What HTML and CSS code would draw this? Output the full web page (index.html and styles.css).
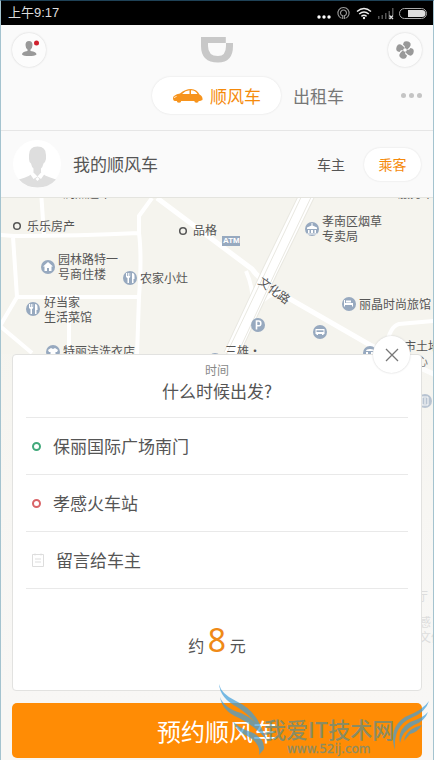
FILE: index.html
```html
<!DOCTYPE html>
<html lang="zh-CN">
<head>
    <meta charset="UTF-8">
    <meta name="viewport" content="width=device-width, initial-scale=1.0">
    <title>我的顺风车</title>
    <link rel="stylesheet" href="styles.css">
</head>
<body>
    <div class="phone">
        <div class="status-bar">
            <span>上午9:17</span>
            <svg class="status-icons" width="112" height="20" viewBox="0 0 112 20">
                <g fill="#fff"><circle cx="3" cy="14" r="1.7"/><circle cx="8" cy="14" r="1.7"/><circle cx="13" cy="14" r="1.7"/></g>
                <g fill="none" stroke="#999" stroke-width="1.1">
                    <path d="M25.5 15.3a5.600 5.600 0 1 1 4 0M26 12.600a3 3 0 1 1 3 0M26.700 12v4M28.400 12v4"/>
                </g>
                <g fill="none" stroke="#eee" stroke-width="1.5">
                    <path d="M41 8.500q7-6 14 0M43.200 11q4.800-4 9.600 0M45.400 13.300q2.600-2 5.200 0"/>
                </g>
                <circle cx="48" cy="15" r="1.200" fill="#eee"/>
                <g fill="#555"><path d="M62 13h1.500v3H62zM65.500 12h1.500v4h-1.500zM69 10h1.500v6H69zM72.500 8H74v8h-1.500zM76 5h1.500v7H76z"/></g>
                <path d="M73.500 12.500l3.500 3.500M77 12.500l-3.500 3.500" stroke="#ddd" stroke-width="1.300"/>
                <rect x="83.500" y="5.500" width="27" height="10" rx="5" fill="none" stroke="#aaa"/>
                <path d="M92 7h14a3.500 3.500 0 0 1 0 7H92z" fill="#ddd"/>
            </svg>
        </div>

        <header class="header">
            <div class="top-row">
                <button class="round-btn" aria-label="个人中心">
                    <svg width="34" height="34" viewBox="0 0 34 34">
                        <path d="M13.500 12q0-4 3.500-4t3.500 4q0 3-2 4.500v1.500q6 .8 6 3.500-2 1.500-7.500 1.500T10 21.500q0-2.700 5.500-3.500v-1.500q-2-1.500-2-4.500z" fill="#999"/>
                        <circle cx="24.500" cy="10" r="2.500" fill="#d0202e"/>
                    </svg>
                </button>
                <svg class="logo" width="32" height="26" viewBox="0 0 32 26">
                    <path d="M0 0H25V6H32V9Q32 25.500 17 25.500Q0 25.500 0 9ZM7 6V9Q7 19 17 19Q25 19 25 9V6Z" fill="#c8c8c8" fill-rule="evenodd"/>
                    <path d="M25.300 0V6" stroke="#fafafa"/>
                </svg>
                <button class="round-btn" aria-label="活动">
                    <svg width="34" height="34" viewBox="0 0 34 34">
                        <g fill="#999" transform="rotate(18 17 17)">
                            <path id="blade" d="M16 17Q17 13 13.500 12.500Q12.500 8 17.500 8Q22 8.500 20.500 13L18.500 17z"/>
                            <use href="#blade" transform="rotate(90 17 17)"/>
                            <use href="#blade" transform="rotate(180 17 17)"/>
                            <use href="#blade" transform="rotate(270 17 17)"/>
                        </g>
                        <circle cx="17" cy="17" r="1.800" fill="#fff"/>
                    </svg>
                </button>
            </div>
            <nav class="tabs">
                <button class="tab active">
                    <svg width="32" height="16" viewBox="0 0 32 16">
                        <path d="M1 10q0-3 7-4.500Q13 1 19 1q6 .2 8.500 5.500Q31 8 30.500 12l-2.500 1H3Q1 13 1 10z" fill="#f7941d"/>
                        <path d="M10 6q3.500-3.500 7.500-3.800V6zM19 2.200q4.500.2 6.500 3.800H19z" fill="#fff"/>
                        <g fill="#f7941d"><circle cx="7" cy="12.500" r="2.300"/><circle cx="24.500" cy="12.500" r="2.300"/></g>
                        <path d="M2 9.500q2-.2 2.500-1.500" fill="none" stroke="#fff" stroke-width=".8"/>
                    </svg>
                    顺风车
                </button>
                <button class="tab">出租车</button>
                <button class="more" aria-label="更多"><i></i><i></i><i></i></button>
            </nav>
        </header>

        <section class="profile">
            <svg width="48" height="48" viewBox="0 0 48 48">
                <circle cx="24" cy="24" r="24" fill="#fff"/>
                <path d="M16 15q0-8.500 8.500-8.500T33 15v4q-.5 3-2.500 4.500-1 4-2.500 5V32q2 3.500 15 7.500-7 8-18.500 8T6 39.500Q18 36 20.500 32v-3.500q-1.800-1.500-2.500-5-2-1.500-2-4.500z" fill="#dedede"/>
                <path d="M20 32l4.500 4.500L28.500 32l3 2-3.500 5-3.500-2.500-4 2.500-3.500-5z" fill="#fff"/>
                <path d="M24.500 37l2 2-2 2-2-2z" fill="#fff"/>
            </svg>
            <h1>我的顺风车</h1>
            <button class="role">车主</button>
            <button class="role active">乘客</button>
        </section>

        <main class="map">
            <svg class="roads" width="432" height="563" viewBox="1 197 432 563">
                <g fill="none" stroke="#fff" stroke-width="4">
                    <path d="M41 190L44 234M0 234L14 235Q80 235 139 232M13 236L17 296L0 325M17 296L139 296M69 296V354M0 325L32 352M152 197L139 215V232Q142 255 139 296L137 354"/>
                    <path d="M157 197L252 268Q258 277 276 290L370 344L440 376" stroke-width="5"/>
                    <path d="M246 270Q254 288 253 310M253 310Q264 296 276 292M386 346Q390 325 399 323L434 320M434 323L441 321"/>
                </g>
                <g fill="none">
                    <path d="M309 190L270 270L231 354" stroke="#e9e8e1" stroke-width="16"/>
                    <path d="M309 190L270 270L231 354" stroke="#fff" stroke-width="14"/>
                    <path d="M304 190L268 266L226 354M314 190L275 272L237 354" stroke="#e9e8e1"/>
                </g>
                <g fill="none" stroke="#555" stroke-width="1.500"><circle cx="17" cy="225" r="3.300"/><circle cx="183" cy="230" r="3.300"/></g>
                <g fill="#97a9bf">
                    <circle cx="48" cy="266" r="7"/><circle cx="130" cy="277" r="7"/><circle cx="33" cy="308" r="7"/>
                    <circle cx="53" cy="351" r="7"/><circle cx="312" cy="228" r="7"/><circle cx="258" cy="324" r="7"/>
                    <circle cx="320" cy="331" r="7"/><circle cx="349" cy="303" r="7"/><circle cx="370" cy="352" r="7"/>
                    <circle cx="425" cy="400" r="7"/><circle cx="215" cy="359" r="7"/><rect x="222" y="235" width="18" height="10"/>
                </g>
                <g fill="#fff">
                    <path d="M48 261l5 4.500h-1.500V270H49v-3h-2v3h-2.500v-4.500H43z"/>
                    <path id="fork" d="M126 272h1v3h.8v-3h1v3h.8v-3h.6v4l-1.200 1.200V282h-1.500v-4.800L126 276zM132 272q2.500 0 2.500 3v3H133.500v4H132z"/>
                    <use href="#fork" x="-97" y="31"/>
                    <path d="M48 349l3-2 2 1 2-1 3 2-1 2h-1.500v6h-5v-6H49z"/>
                    <path d="M311.500 222h1v2.500l4.500 2v1.500h-10v-1.500l4.500-2zM308 229h1.500v3H308zM311 229h2v3h-2zM314.500 229h1.500v3h-1.500zM307 232.500h10v1h-10z"/>
                    <path d="M315.500 328h9v5h-1v1h-1.500v-1h-4v1h-1.500v-1h-1zM344 299h1v3h8v3.500h-1V304h-7v1.500h-1zM346 299.500h5v2h-5z"/>
                    <path d="M366 350q0-2 4-2t4 2zM366 351h2v2h-2zM371 351h2v2h-2z"/>
                </g>
                <path d="M316.500 329.300h7v1.700h-7z" fill="#97a9bf"/>
                <path d="M422 396h6v8h-6zM424 398h2M424 400h2M424 402h2" fill="none" stroke="#fff"/>
                <path d="M256.500 328.500V320h2.300q2 0 2 2.500t-2 2.300h-2.300" fill="none" stroke="#fff" stroke-width="1.600"/>
            </svg>
            <span class="place atm">ATM</span>
            <span class="place lele">乐乐房产</span>
            <span class="place pinge">品格</span>
            <span class="place yuanlin">园林路特一<br>号商住楼</span>
            <span class="place nongjia">农家小灶</span>
            <span class="place haodang">好当家<br>生活菜馆</span>
            <span class="place teli">特丽洁洗衣店</span>
            <span class="place xiaonan">孝南区烟草<br>专卖局</span>
            <span class="place lijing">丽晶时尚旅馆</span>
            <span class="place sanxiong">三雄·</span>
            <span class="place shitu">市土地<br>中心</span>
            <span class="place wenhua">文化路</span>
            <span class="place upper">润点造车</span>
            <span class="place service">服务中心</span>
            <div class="haze"></div>
            <span class="place faded ting">厅</span>
            <span class="place faded office">感<br>文体</span>

            <div class="sheet">
                <button class="close" aria-label="关闭">
                    <svg width="14" height="14" viewBox="0 0 14 14"><path d="M1 1l12 12M13 1L1 13" stroke="#777" stroke-width="1.300"/></svg>
                </button>
                <button class="row when">
                    <small>时间</small>
                    <span>什么时候出发?</span>
                </button>
                <button class="row"><i class="dot start"></i>保丽国际广场南门</button>
                <button class="row"><i class="dot end"></i>孝感火车站</button>
                <button class="row note">
                    <svg width="12" height="14" viewBox="0 0 12 14"><path d="M.5 1.500h11v12H.5zM3 .5v2M9 .5v2M3 6h6M3 9h6" fill="none" stroke="#ddd"/></svg>
                    留言给车主
                </button>
                <p class="price">约 <strong>8</strong> 元</p>
            </div>
            <button class="submit">预约顺风车</button>

            <svg class="watermark" width="214" height="76" viewBox="0 0 214 76">
                <g fill="#3f9fdc">
                    <path d="M0 0Q2 10 17 17Q39 27 45 52Q35 33 18 23Q1 14 0 0z"/>
                    <path d="M1 13Q5 24 22 29Q41 37 48 56Q36 42 20 34Q3 27 1 13z"/>
                    <path d="M14 37Q19 44 32 48Q46 54 45 65L40 71Q42 60 30 53Q17 47 14 37z"/>
                    <path d="M210 17Q207 28 192 34Q174 42 176 66Q169 44 186 33Q204 26 210 17z"/>
                    <path d="M209 28Q206 37 195 41Q183 47 181 59Q178 46 191 38Q204 34 209 28z"/>
                    <path d="M203 41Q199 48 191 50L185 57Q187 45 203 41z"/>
                </g>
                <text class="wm-title" x="45" y="54">我爱IT技术网</text>
                <text class="wm-url" x="68" y="69">www.52ij.com</text>
            </svg>
        </main>
    </div>
</body>
</html>
```

FILE: styles.css
```css
* { box-sizing: border-box; }
body { margin: 0; font-family: "Noto Sans CJK SC", sans-serif; color: #555; background-color: #fafafa; }
button { padding: 0; border: none; background: none; font: inherit; color: inherit; cursor: pointer; }
svg { display: block; flex-shrink: 0; }

.phone { min-height: 100vh; display: flex; flex-direction: column; border: 1px solid #a4c3cf; border-top-color: #1f4257; border-bottom: none; overflow: hidden; }
.status-bar { height: 24px; padding: 0 5px 0 7px; display: flex; align-items: center; justify-content: space-between; background-color: #000; color: #ddd; font-family: "Liberation Sans", "Noto Sans CJK SC", sans-serif; font-size: 13px; line-height: 20px; }

.header { height: 106px; padding: 8px 11px 0; border-bottom: 1px solid #e6e6e6; background-color: #fafafa; }
.top-row { display: flex; align-items: center; justify-content: space-between; }
.round-btn { width: 34px; height: 34px; border-radius: 50%; box-shadow: 0 0 2px #ccc; background-color: #fcfcfc; }
.tabs { margin-top: 10px; display: flex; align-items: center; justify-content: flex-end; }
.tab { height: 37px; font-size: 17px; line-height: 24px; color: #777; }
.tab.active { width: 129px; margin-right: 12px; display: flex; align-items: center; justify-content: center; gap: 6px; border-radius: 19px; background-color: #fff; box-shadow: 0 0 2px #ddd; color: #f58a0b; }
.more { margin-left: 57px; display: flex; gap: 3px; }
.more i { width: 5px; height: 5px; border-radius: 50%; background-color: #c4c4c4; }

.profile { height: 67px; padding: 0 12px; display: flex; align-items: center; background-color: #fafafa; border-bottom: 1px solid #e4e4df; }
.profile h1 { margin: 0 auto 0 12px; font-size: 17px; font-weight: normal; line-height: 24px; }
.role { font-size: 14px; line-height: 20px; }
.role.active { width: 57px; height: 33px; margin-left: 19px; border-radius: 17px; background-color: #fff; box-shadow: 0 0 2px #ddd; color: #f58a0b; }

.map { position: relative; flex-grow: 1; padding: 156px 11px 2px; display: flex; flex-direction: column; background-color: #f5f4ee; overflow: hidden; }
.roads { position: absolute; top: 0; left: 0; }
.haze { position: absolute; top: 156px; left: 0; width: 100%; bottom: 0; background: linear-gradient(rgba(248, 247, 245, 0.2), rgba(248, 247, 245, 0.85) 50%, #f8f7f5 90%); }

/* map labels */
.place { position: absolute; font-size: 12px; line-height: 15px; color: #555; white-space: nowrap; }
.atm { left: 222px; top: 36px; font-family: "Liberation Sans", sans-serif; font-size: 8px; line-height: 13px; font-weight: bold; color: #fff; }
.lele { left: 26px; top: 20px; }
.pinge { left: 192px; top: 24px; }
.yuanlin { left: 57px; top: 53px; }
.nongjia { left: 139px; top: 72px; }
.haodang { left: 43px; top: 96px; }
.teli { left: 62px; top: 145px; }
.xiaonan { left: 321px; top: 15px; }
.lijing { left: 358px; top: 98px; }
.sanxiong { left: 224px; top: 145px; }
.shitu { left: 403px; top: 140px; }
.wenhua { left: 256px; top: 84px; transform: rotate(36deg); }
.upper { left: 62px; top: -13px; }
.service { left: 397px; top: -13px; }
.faded { color: #ddd; }
.ting { left: 415px; top: 390px; }
.office { left: 418px; top: 416px; }

.sheet { position: relative; min-height: 337px; padding: 0 13px; display: flex; flex-direction: column; border: 1px solid #e2e2e0; border-radius: 4px; background-color: #fff; }
.close { position: absolute; top: -19px; right: 11px; width: 37px; height: 37px; display: flex; align-items: center; justify-content: center; border-radius: 50%; background-color: #fff; box-shadow: 0 0 2px #ccc; }
.row { height: 57px; padding: 0 6px; display: flex; align-items: center; gap: 12px; border-bottom: 1px solid #e9e9e9; font-size: 17px; line-height: 24px; text-align: left; }
.row.when { height: 63px; flex-direction: column; gap: 0; padding-top: 7px; }
.when small { font-size: 12px; line-height: 16px; color: #888; }
.when span { line-height: 26px; }
.dot { width: 9px; height: 9px; border: 2px solid #42a97b; border-radius: 50%; }
.dot.end { border-color: #d96468; }
.price { margin: auto; padding-top: 6px; font-size: 16px; line-height: 44px; }
.price strong { font-family: "Noto Sans", sans-serif; font-size: 32px; font-weight: normal; color: #ef8a17; }
.submit { position: relative; height: 55px; margin-top: 12px; border-radius: 5px; background-color: #ff8c05; color: #fff; font-size: 24px; line-height: 36px; }

.watermark { position: absolute; right: 0; bottom: 0; opacity: 0.7; pointer-events: none; }
.wm-title { font-size: 22px; font-weight: 500; fill: #5a8c8c; }
.wm-url { font-family: "DejaVu Sans", sans-serif; font-size: 12px; fill: #5a8c8c; stroke: #5a8c8c; stroke-width: 0.3px; }
```
